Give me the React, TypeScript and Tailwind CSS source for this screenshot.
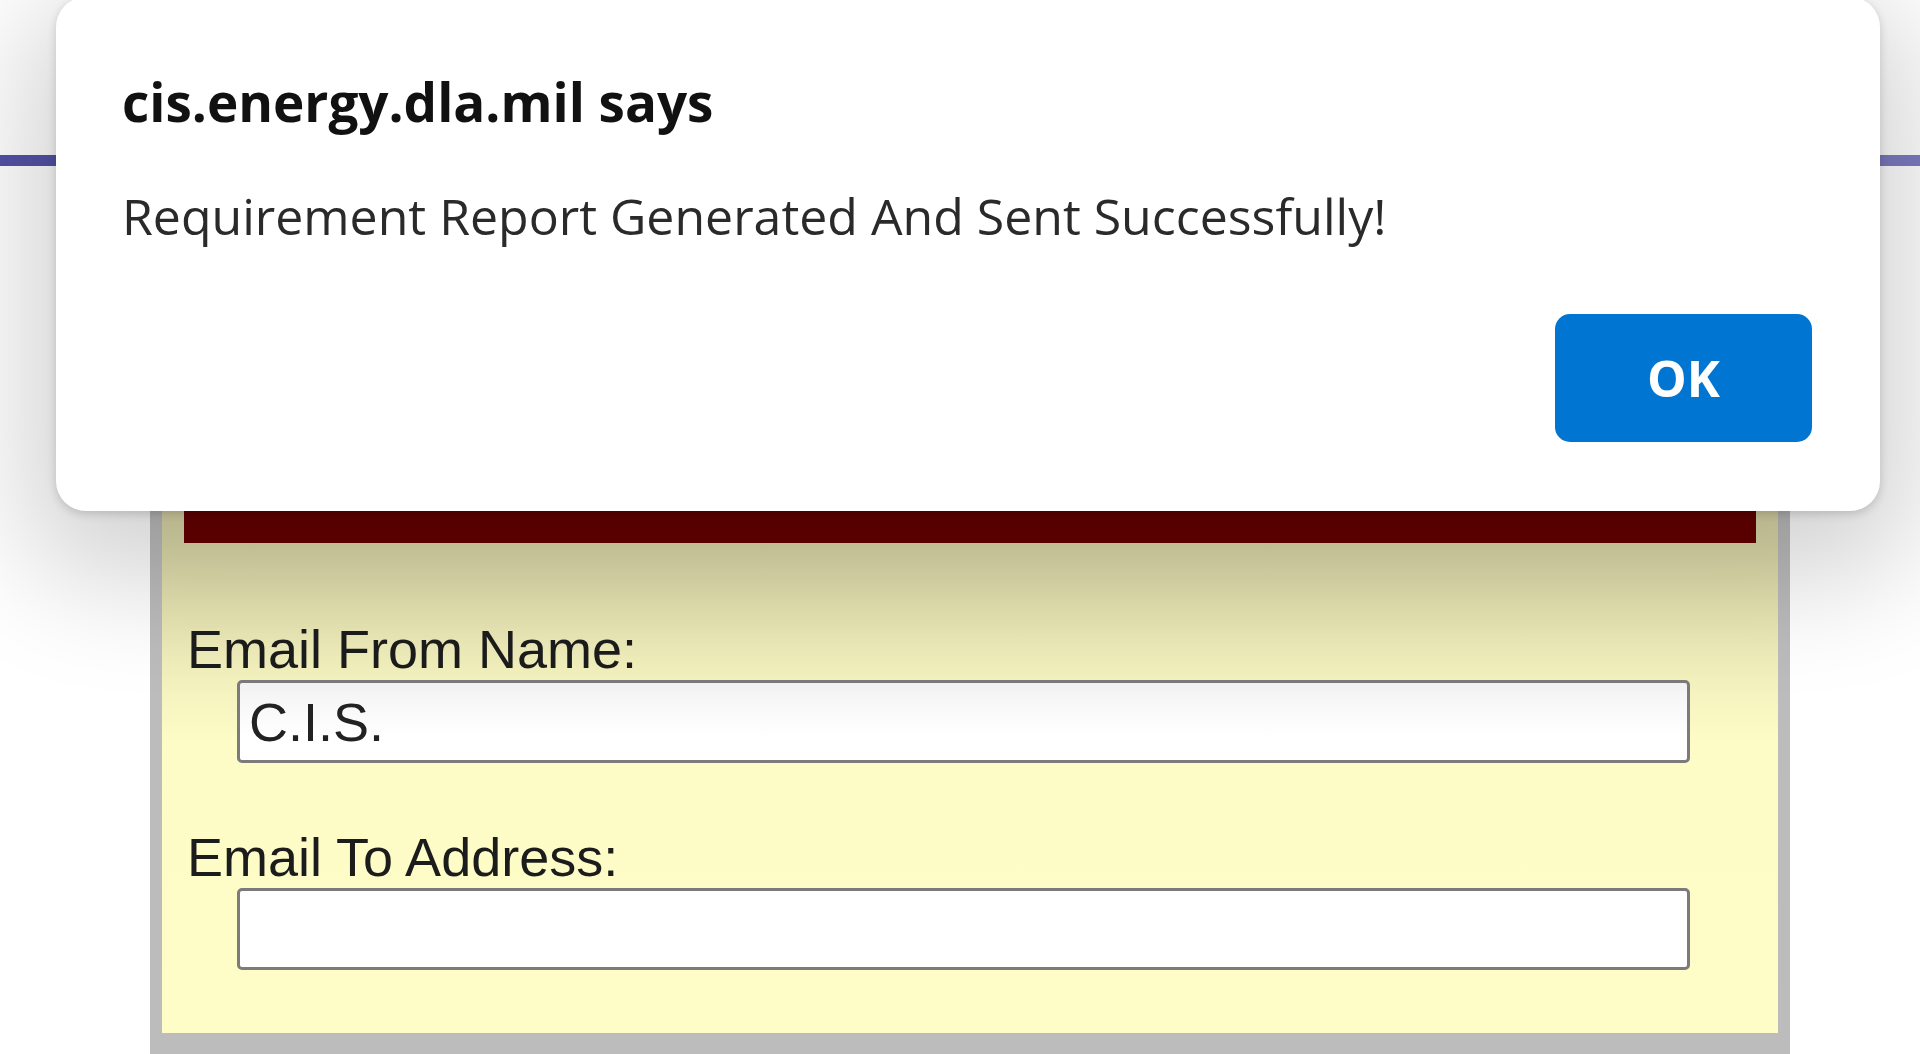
import React from "react";

export default function App() {
  return (
    <div className="relative w-full h-[1054px] overflow-hidden bg-white">
      {/* page behind dialog */}
      <div className="h-[155px] bg-white" />
      <div className="h-[11px] bg-[linear-gradient(90deg,#5252a6,#6a6ab6_50%,#7c7cc2)]" />
      <div className="ml-[150px] mt-[34px] w-[1640px] bg-[#bcbcbc] px-[12px] pt-[12px] pb-[60px]">
        <div className="bg-[linear-gradient(180deg,#d8d5a6_0px,#dcd9a9_330px,#fdfcc6_530px,#fefdc8_100%)] px-[22px] pt-[22px] pb-[63px]">
          <div className="h-[309px] bg-[#660000]" />
          <div className="pl-[3px] pt-[75px] font-['Liberation_Sans',Arial,sans-serif] text-[54px] text-[#1c1c1c]">
            <div className="leading-[62px]">Email From Name:</div>
            <div className="pl-[50px] pr-[66px]">
              <div className="h-[83px] rounded-[5px] border-[3px] border-[#7b7b7b] bg-[linear-gradient(180deg,#f3f3f3,#ffffff_70%)] flex items-center pl-[9px] leading-none text-[#222]">
                C.I.S.
              </div>
            </div>
            <div className="mt-[63px] leading-[62px]">Email To Address:</div>
            <div className="pl-[50px] pr-[66px]">
              <div className="h-[82px] rounded-[5px] border-[3px] border-[#7b7b7b] bg-white" />
            </div>
          </div>
        </div>
      </div>

      {/* browser alert dialog */}
      <div className="absolute left-[56px] top-[-3px] w-[1824px] h-[514px] rounded-[30px] bg-white shadow-[0_36px_120px_30px_rgba(0,0,0,0.18),0_3px_10px_rgba(0,0,0,0.16)] font-['Open_Sans','Noto_Sans',sans-serif] pl-[66px] pr-[68px] pt-[75px] pb-[69px] flex flex-col">
        <div className="text-[53px] leading-[60px] font-bold text-[#111]">cis.energy.dla.mil says</div>
        <div className="mt-[54px] text-[50px] leading-[60px] text-[#2a2a2a]">
          Requirement Report Generated And Sent Successfully!
        </div>
        <div className="mt-auto flex justify-end">
          <button className="w-[257px] h-[128px] rounded-[15px] bg-[#0075d1] text-white text-[50px] font-bold leading-none flex items-center justify-center">
            OK
          </button>
        </div>
      </div>
    </div>
  );
}
